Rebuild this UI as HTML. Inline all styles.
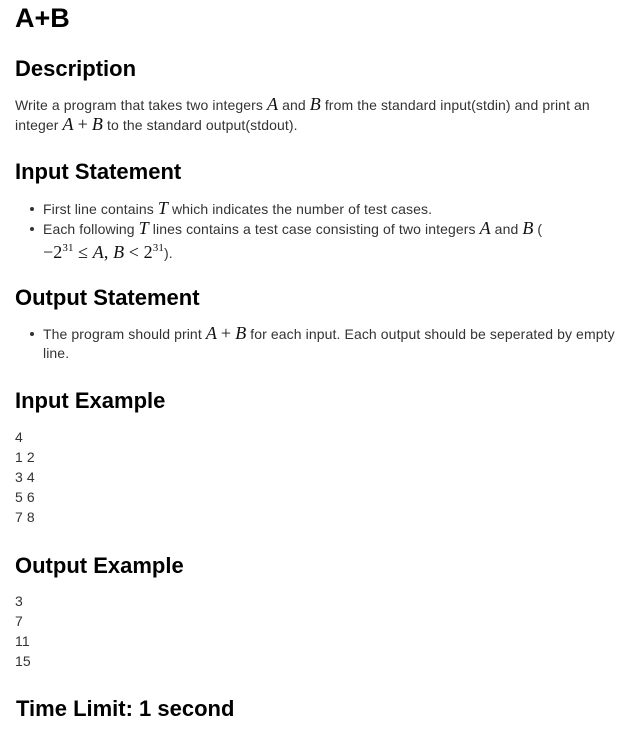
<!DOCTYPE html>
<html><head><meta charset="utf-8"><style>
body{margin:0;width:629px;height:732px;background:#fff;font-family:"Liberation Sans",Arial,sans-serif;color:#222;position:relative;overflow:hidden}
div{position:absolute;left:15px;white-space:nowrap}
.h{font-weight:bold;font-size:22px;line-height:28px;color:#000}
.t{font-size:14px;line-height:20px;color:#333;letter-spacing:0.1px}
.m{font-family:"Liberation Serif",serif;font-style:italic;font-size:18px;color:#111}
.r{font-family:"Liberation Serif",serif;font-size:18px;color:#111}
.b{left:43px}
.b:before{content:"";position:absolute;left:-13px;top:9px;width:4px;height:4px;border-radius:50%;background:#333}
sup{font-size:11px;font-style:normal}
</style></head><body>
<div class="h" style="top:3px;font-size:27px;line-height:30px">A+B</div>
<div class="h" style="top:55px">Description</div>
<div class="t" style="top:94px">Write a program that takes two integers <span class="m">A</span> and <span class="m">B</span> from the standard input(stdin) and print an</div>
<div class="t" style="top:114px">integer <span class="m">A</span> <span class="r">+</span> <span class="m">B</span> to the standard output(stdout).</div>
<div class="h" style="top:158px">Input Statement</div>
<div class="t b" style="top:198px">First line contains <span class="m">T</span> which indicates the number of test cases.</div>
<div class="t b" style="top:218px">Each following <span class="m">T</span> lines contains a test case consisting of two integers <span class="m">A</span> and <span class="m">B</span> (</div>
<div class="t" style="top:238px;left:43px"><span class="r">−2<sup>31</sup> ≤ </span><span class="m">A</span><span class="r">, </span><span class="m">B</span><span class="r"> &lt; 2<sup>31</sup></span>).</div>
<div class="h" style="top:284px">Output Statement</div>
<div class="t b" style="top:323px">The program should print <span class="m">A</span> <span class="r">+</span> <span class="m">B</span> for each input. Each output should be seperated by empty</div>
<div class="t" style="top:343px;left:43px">line.</div>
<div class="h" style="top:387px">Input Example</div>
<div class="t" style="top:427px">4</div>
<div class="t" style="top:447px">1 2</div>
<div class="t" style="top:467px">3 4</div>
<div class="t" style="top:487px">5 6</div>
<div class="t" style="top:507px">7 8</div>
<div class="h" style="top:552px">Output Example</div>
<div class="t" style="top:591px">3</div>
<div class="t" style="top:611px">7</div>
<div class="t" style="top:631px">11</div>
<div class="t" style="top:651px">15</div>
<div class="h" style="top:695px;left:16px">Time Limit: 1 second</div>
</body></html>
